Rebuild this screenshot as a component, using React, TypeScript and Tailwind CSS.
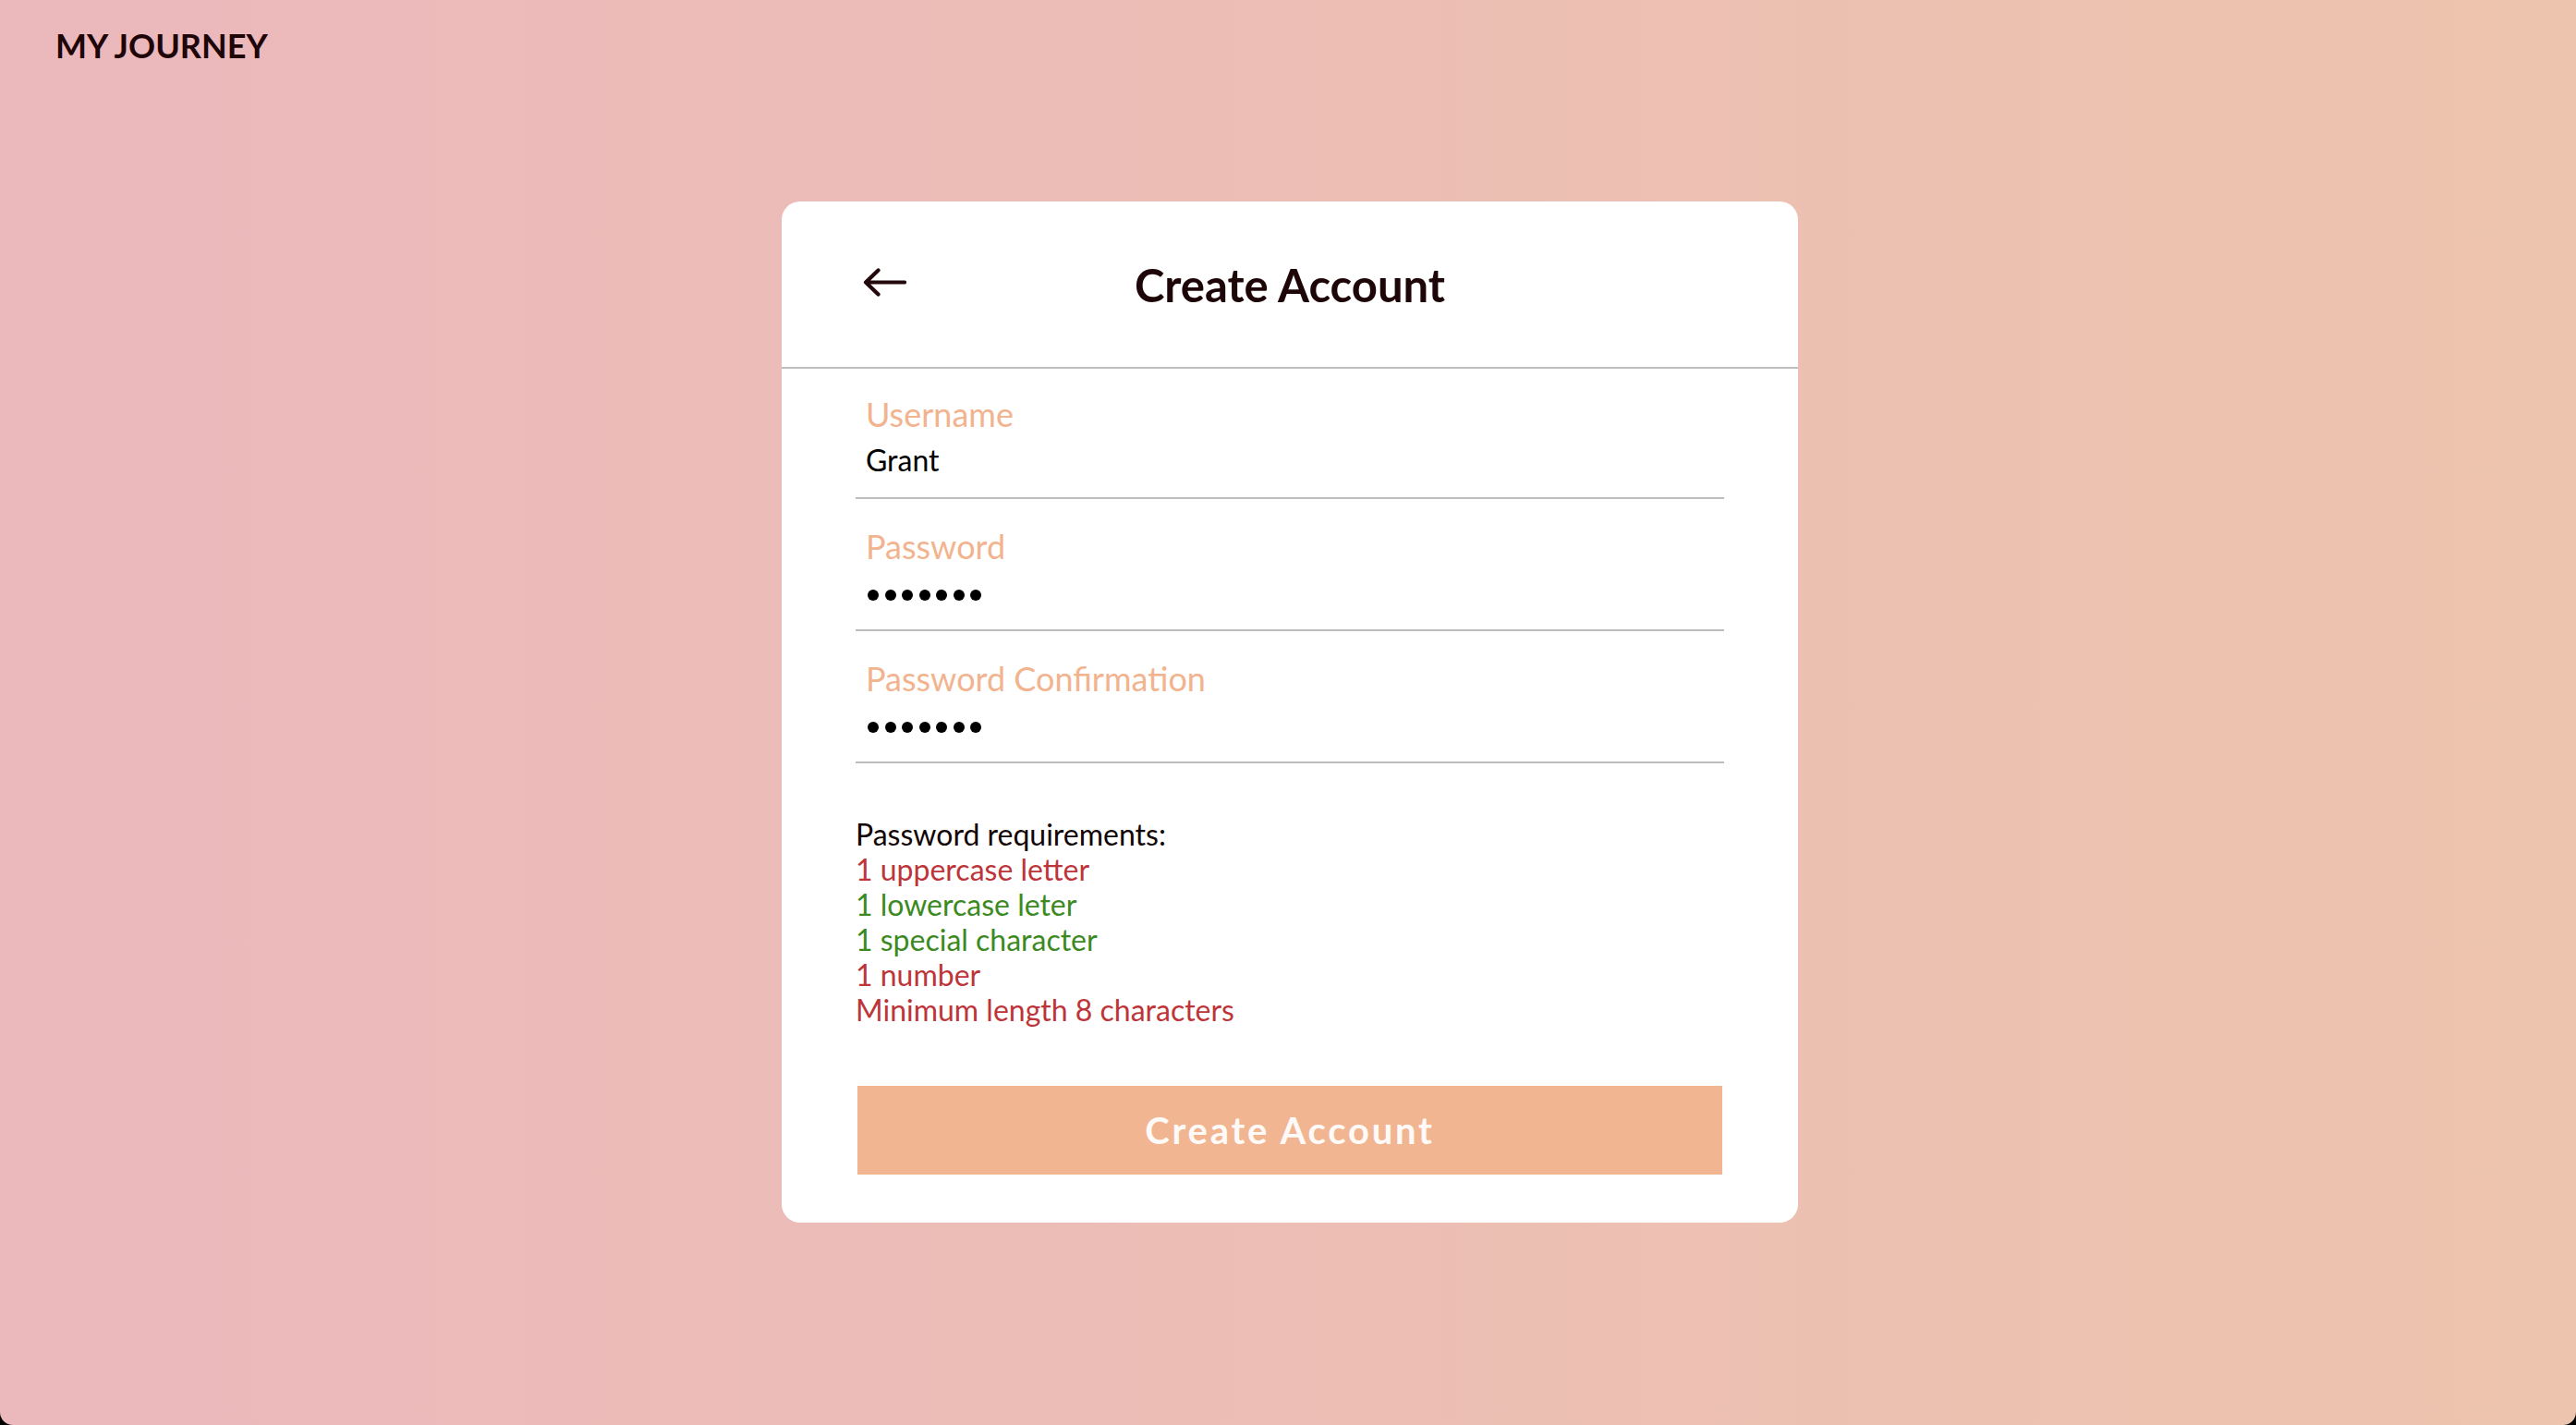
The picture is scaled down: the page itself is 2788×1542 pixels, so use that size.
const requirements = [
  { text: "1 uppercase letter", ok: false },
  { text: "1 lowercase leter", ok: true },
  { text: "1 special character", ok: true },
  { text: "1 number", ok: false },
  { text: "Minimum length 8 characters", ok: false },
];

const BackArrow = () => (
  <svg width="47" height="31" viewBox="0 0 47 31" fill="none">
    <path
      d="M45 15.5H3M16.5 2.5L3 15.5L16.5 28.5"
      stroke="#22080a"
      strokeWidth="4.2"
      strokeLinecap="round"
      strokeLinejoin="round"
    />
  </svg>
);

const Dots = () => (
  <div className="ml-[2px] flex h-[38px] items-end gap-[6.5px] pb-[10px]">
    {Array.from({ length: 7 }).map((_, i) => (
      <span key={i} className="h-[12px] w-[12px] rounded-full bg-black" />
    ))}
  </div>
);

const Field = ({
  label,
  value,
  secret,
  first,
}: {
  label: string;
  value: string;
  secret?: boolean;
  first?: boolean;
}) => (
  <div
    className={`flex flex-col gap-[9px] border-b-2 border-[#bdbdbd] px-[11px] pb-[21px] ${
      first ? "pt-[28px]" : "pt-[30px]"
    }`}
  >
    <div className="text-[36px] leading-[43px] text-[#f2b38f]">{label}</div>
    {secret ? (
      <Dots />
    ) : (
      <div className="text-[32px] leading-[38px] text-black">{value}</div>
    )}
  </div>
);

export default function App() {
  return (
    <div className="h-[1542px] w-full overflow-hidden bg-black font-['Lato',sans-serif]">
      <div className="h-full rounded-b-[14px] bg-gradient-to-r from-[#ebb8bc] to-[#edc4ad] pl-[4px]">
        <div className="pl-[56px] pt-[28px] text-[36px] font-bold leading-[43px] text-[#1e0507]">
          MY JOURNEY
        </div>

        <div className="mx-auto mt-[147px] w-[1100px] rounded-[20px] bg-white pb-[52px]">
          <div className="grid h-[181px] grid-cols-[1fr_auto_1fr] items-center border-b-2 border-[#bebebe]">
            <div className="pl-[88px] pb-[4px]">
              <BackArrow />
            </div>
            <h1 className="text-[49px] font-bold leading-[58px] text-[#1e0608]">
              Create Account
            </h1>
            <div />
          </div>

          <div className="px-[80px]">
            <Field label="Username" value="Grant" first />
            <Field label="Password" value="1234567" secret />
            <Field label="Password Confirmation" value="1234567" secret />

            <div className="mt-[58px] text-[32px] leading-[38px]">
              <div className="text-[#120606]">Password requirements:</div>
              {requirements.map((r) => (
                <div
                  key={r.text}
                  className={r.ok ? "text-[#3b8a1f]" : "text-[#bd3539]"}
                >
                  {r.text}
                </div>
              ))}
            </div>

            <button
              type="button"
              className="mx-[2px] mt-[63px] flex h-[96px] w-[936px] items-center justify-center bg-[#f2b592] text-[40px] font-bold tracking-[2.8px] text-[#fdfaf8]"
            >
              Create Account
            </button>
          </div>
        </div>
      </div>
    </div>
  );
}
